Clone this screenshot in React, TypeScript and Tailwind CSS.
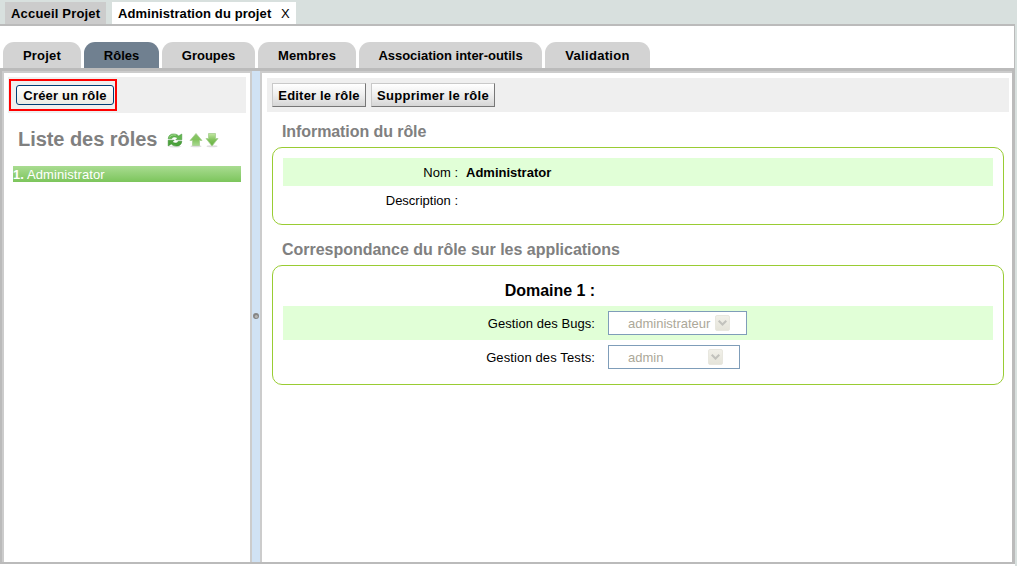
import React from "react";

const tabs = [
  { label: "Projet", width: "w-[78px]", tracking: "tracking-[0.2px]" },
  { label: "Rôles", width: "w-[75px]", tracking: "tracking-normal", active: true },
  { label: "Groupes", width: "w-[93px]", tracking: "tracking-normal" },
  { label: "Membres", width: "w-[98px]", tracking: "tracking-[0.15px]" },
  { label: "Association inter-outils", width: "w-[183px]", tracking: "tracking-[-0.01px]" },
  { label: "Validation", width: "w-[105px]", tracking: "tracking-[0.3px]" },
];

function RefreshIcon() {
  return (
    <svg width="16" height="16" viewBox="0 0 16 16" className="block">
      <ellipse cx="8" cy="14.6" rx="6.5" ry=".8" fill="#e3e3e3" />
      <path d="M1.200 6.800C1.400 3.300 3.800 1.900 6.500 1.900c2.300 0 4 .8 5.200 2L14.800 2v5.800H8.800l1.700-1.700C8.300 4.300 5.600 4.700 4.600 6.800z" fill="#62b64f" stroke="#45953a" strokeWidth=".5" />
      <path d="M14.800 9.200c-.2 3.500-2.600 4.900-5.300 4.900-2.300 0-4-.8-5.200-2L1.200 14V8.200h6L5.500 9.900c2.200 1.800 4.900 1.400 5.900-.7z" fill="#4ba33b" stroke="#34842c" strokeWidth=".5" />
      <path d="M2.500 5.400C3.300 3.200 6 2.400 8.800 3.200" fill="none" stroke="#a6dc91" strokeWidth="1" />
    </svg>
  );
}

function ArrowIcon({ down = false }: { down?: boolean }) {
  return (
    <svg width="14" height="16" viewBox="0 0 14 16" className="block">
      <defs>
        <linearGradient id={down ? "arrowDown" : "arrowUp"} x1="0" y1="0" x2="0" y2="1">
          <stop offset="0" stopColor={down ? "#c3e7a2" : "#8bc66b"} />
          <stop offset=".5" stopColor="#82c35d" />
          <stop offset="1" stopColor={down ? "#63ae3e" : "#a8d990"} />
        </linearGradient>
      </defs>
      <ellipse cx="7" cy="14.300" rx="5.500" ry="1" fill="#dedede" />
      <path
        d={down ? "M3.500 1.500h7v5H13L7 14 1 6.500h2.500z" : "M7 1.500L13 8.500h-2.500v5h-7v-5H1z"}
        fill={down ? "url(#arrowDown)" : "url(#arrowUp)"}
        stroke="#a6ce91"
        strokeWidth=".8"
        strokeLinejoin="round"
      />
    </svg>
  );
}

function ToolButton({ children, className }: { children: React.ReactNode; className: string }) {
  return (
    <button
      className={`h-6 border border-t-[#c9c9c9] border-l-[#c9c9c9] border-r-[#777777] border-b-[#777777] bg-linear-to-b from-white via-[#eeeeee] to-[#d6d6d6] text-center text-[13px] leading-[23px] font-bold whitespace-nowrap ${className}`}
    >
      {children}
    </button>
  );
}

function DisabledSelect({ value, className, textWidth }: { value: string; className: string; textWidth: string }) {
  return (
    <div className={`flex h-6 items-center border border-[#7f9db9] bg-white pl-[19px] text-[#aca899] ${className}`}>
      <span className={`pt-px leading-[23px] ${textWidth}`}>{value}</span>
      <span className="flex h-4 w-[15px] items-center justify-center rounded-[2px] border border-[#e8e7df] bg-linear-to-b from-[#f1f0e9] to-[#e5e4da]">
        <svg width="9" height="6" viewBox="0 0 9 6" className="shrink-0">
          <path d="M.7.7l3.800 3.800L8.300.7" fill="none" stroke="#c2c2bd" strokeWidth="2" />
        </svg>
      </span>
    </div>
  );
}

export default function App() {
  return (
    <div
      className="flex h-[566px] w-[1017px] flex-col overflow-hidden bg-[#d8e0de] text-[13px] text-black"
      style={{ fontFamily: '"Liberation Sans", Arial, sans-serif' }}
    >
      <header className="flex h-6 shrink-0 gap-1.5 pt-0.5 pl-[5px] font-bold leading-[23px]">
        <div className="w-[101px] bg-[#cccccc] pl-1.5 tracking-[0.18px] whitespace-nowrap">Accueil Projet</div>
        <div className="flex w-[184px] bg-white pl-1.5 whitespace-nowrap">
          <span className="w-[163px] tracking-[0.1px]">Administration du projet</span>
          <span className="font-normal">X</span>
        </div>
      </header>

      <div className="flex h-[44px] w-[1015px] shrink-0 items-end gap-[3px] border-t-2 border-r border-[#bbbbbb] bg-white pl-[3px]">
        {tabs.map((t) => (
          <div
            key={t.label}
            className={`h-[26px] shrink-0 rounded-t-[11px] text-center font-bold leading-[27px] whitespace-nowrap ${t.width} ${t.tracking} ${t.active ? "bg-[#708090]" : "bg-[#d3d3d3]"}`}
          >
            {t.label}
          </div>
        ))}
      </div>

      <main className="flex h-[496px] w-[1015px] shrink-0 border-t-[3px] border-r-[3px] border-b-2 border-l-2 border-[#bbbbbb] bg-white">
        <aside className="w-[250px] shrink-0 border-t-2 border-r-2 border-l-2 border-[#cccccc] pt-1">
          <div className="ml-1 flex h-9 w-[238px] bg-[#efefef] pt-0.5 pl-px">
            <div className="h-8 w-[108px] border-2 border-[#ff0000] pt-1 pl-[5px]">
              <button className="block h-5 w-[98px] rounded-[3px] border border-[#003c74] bg-linear-to-b from-white to-[#ecebe5] text-center font-bold leading-[19px] tracking-[0.18px] whitespace-nowrap">
                Créer un rôle
              </button>
            </div>
          </div>
          <div className="mt-[14px] flex h-[26px] pl-[14px]">
            <h1 className="w-[149px] text-xl leading-[25px] font-bold tracking-[-0.05px] whitespace-nowrap text-[#808080]">Liste des rôles</h1>
            <div className="flex pt-[5px]">
              <RefreshIcon />
              <span className="ml-1.5"><ArrowIcon /></span>
              <span className="ml-0.5"><ArrowIcon down /></span>
            </div>
          </div>
          <div className="mt-[13px] ml-[9px] h-4 w-[228px] bg-linear-to-b from-[#a9dc91] to-[#7cc55b] leading-[18px] tracking-[0.08px] whitespace-nowrap text-white">
            <b>1.</b> Administrator
          </div>
        </aside>

        <div className="flex w-2 shrink-0 items-center bg-[#d0e2f4]">
          <svg width="8" height="8" viewBox="0 0 8 8" className="mb-px block">
            <circle cx="4" cy="4" r="3" fill="#858585" />
            <circle cx="4.300" cy="4.500" r="1.500" fill="#b5b5b5" />
          </svg>
        </div>

        <section className="w-[752px] shrink-0 border-t-2 border-l-2 border-[#cccccc] pt-[5px]">
          <div className="ml-[5px] flex h-[34px] w-[742px] gap-[5px] bg-[#efefef] pt-[5px] pl-[5px]">
            <ToolButton className="w-[94px] tracking-[0.18px]">Editer le rôle</ToolButton>
            <ToolButton className="w-[124px] tracking-[0.3px]">Supprimer le rôle</ToolButton>
          </div>

          <h2 className="mt-[10px] ml-5 h-[25px] text-base leading-5 font-bold tracking-[-0.08px] text-[#808080]">Information du rôle</h2>
          <div className="ml-2.5 h-[78px] w-[732px] rounded-[10px] border border-[#99cc33] px-2.5 pt-2.5">
            <div className="flex h-7 gap-[8px] bg-[#e1ffd7] leading-[29px]">
              <span className="w-[175px] text-right">Nom :</span>
              <b>Administrator</b>
            </div>
            <div className="h-7 w-[175px] text-right leading-[29px]">Description :</div>
          </div>

          <h2 className="mt-[15px] ml-5 h-[25px] text-base leading-[19px] font-bold tracking-[-0.02px] text-[#808080]">Correspondance du rôle sur les applications</h2>
          <div className="ml-2.5 h-[120px] w-[732px] rounded-[10px] border border-[#99cc33] px-2.5 pt-2.5">
            <h3 className="h-[30px] w-[312px] text-right text-base leading-[29px] font-bold tracking-[-0.05px]">Domaine 1 :</h3>
            <div className="flex h-[34px] items-center gap-[13px] bg-[#e1ffd7]">
              <span className="w-[312px] pt-0.5 text-right tracking-[0.06px]">Gestion des Bugs:</span>
              <DisabledSelect value="administrateur" className="w-[139px]" textWidth="w-[87px]" />
            </div>
            <div className="flex h-[34px] items-center gap-[13px]">
              <span className="w-[312px] pt-0.5 text-right tracking-[0.12px]">Gestion des Tests:</span>
              <DisabledSelect value="admin" className="w-[132px]" textWidth="w-[80px]" />
            </div>
          </div>
        </section>
      </main>
      <div className="h-0.5 w-[1015px] shrink-0 bg-white" />
    </div>
  );
}
